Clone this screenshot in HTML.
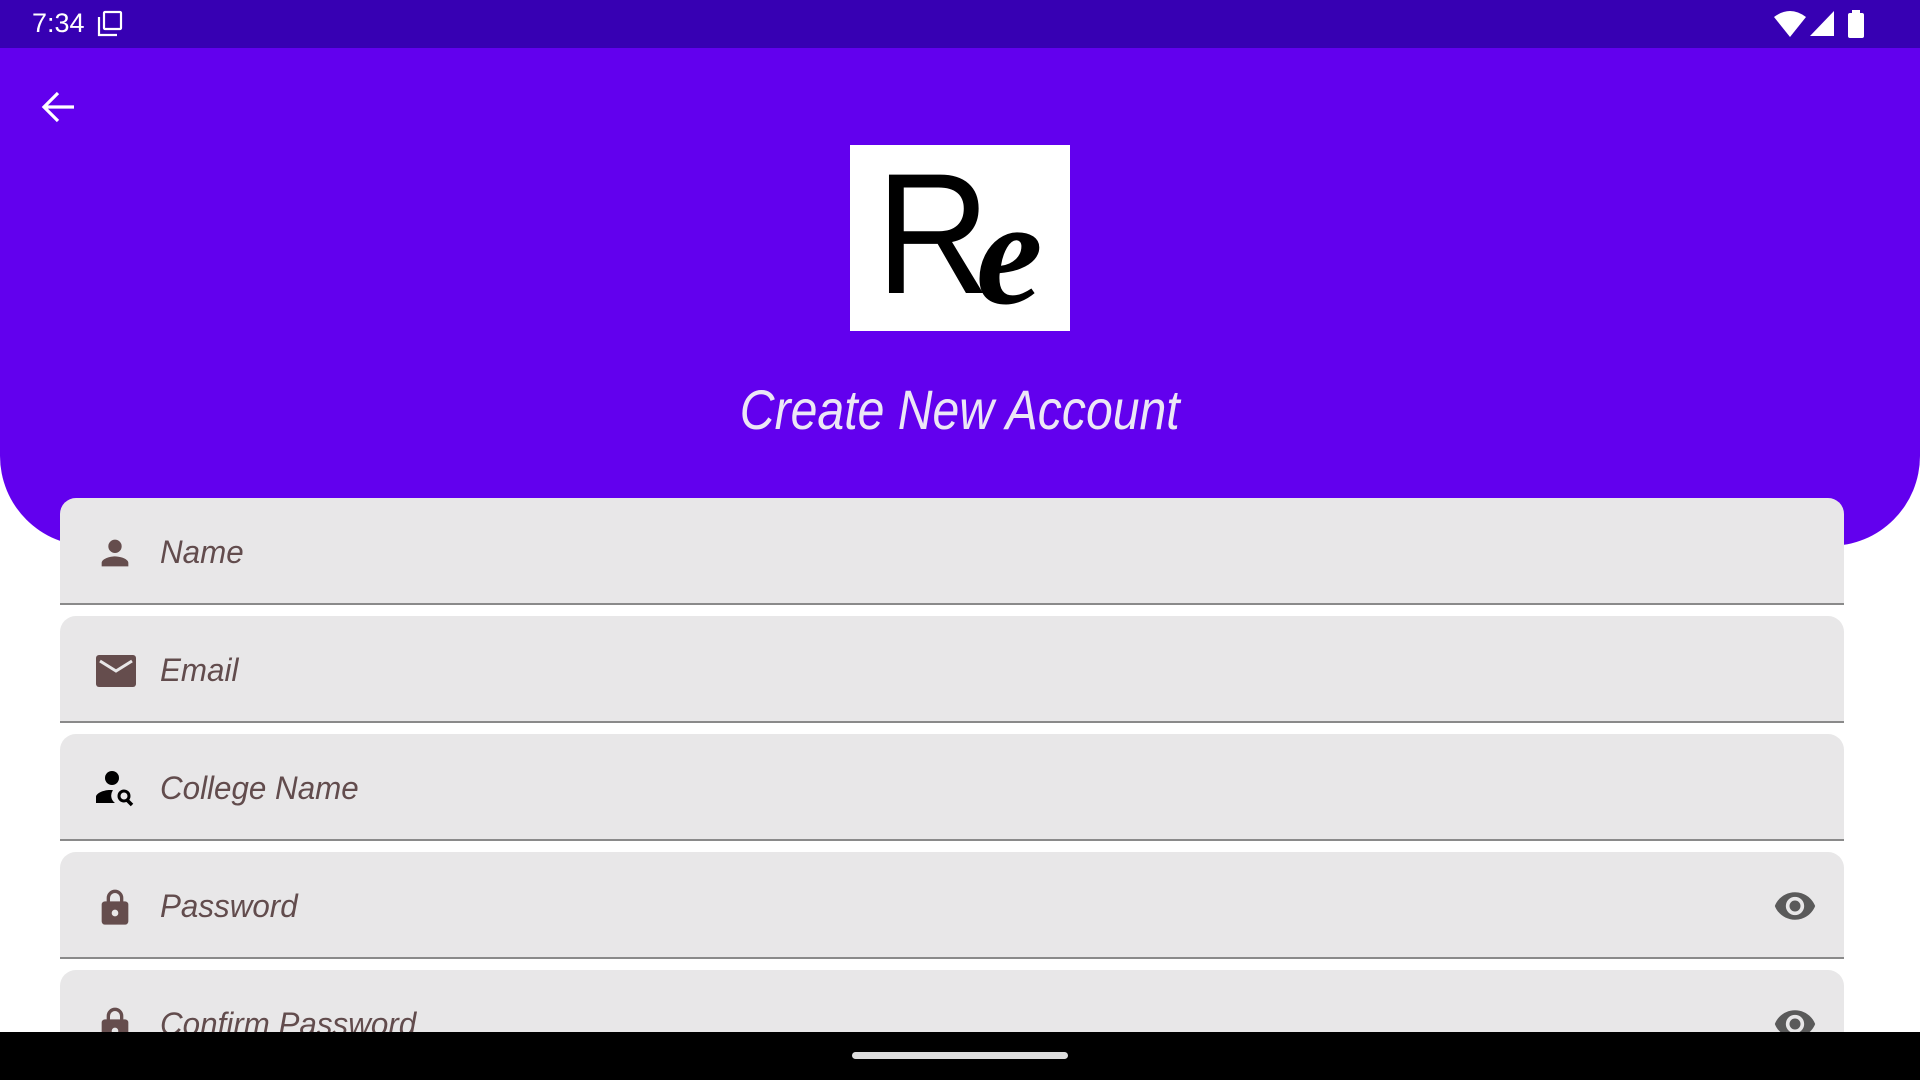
<!DOCTYPE html><html><head><style>
body{margin:0;width:1920px;height:1080px;overflow:hidden;background:#fff;font-family:"Liberation Sans",sans-serif;position:relative}
.sb{position:absolute;left:0;top:0;width:1920px;height:48px;background:#3700B3;color:#fff}
.hd{position:absolute;left:0;top:48px;width:1920px;height:498px;background:#6200EE;border-radius:0 0 90px 90px}
.logo{position:absolute;left:850px;top:145px;width:220px;height:186px;background:#fff;overflow:hidden}
.title{position:absolute;left:0;width:1920px;top:377px;text-align:center}
.title span{display:inline-block;color:#ece6f6;font-style:italic;font-size:56px;transform:scaleX(.86)}
.f{position:absolute;left:60px;width:1784px;height:105px;background:#e8e7e8;border-radius:16px 16px 0 0;border-bottom:2px solid #8a8a8a}
.f span{position:absolute;left:100px;top:36px;font-size:32px;font-style:italic;color:#624c4d;transform:scaleX(.98);transform-origin:left}
.f svg.ic{position:absolute;left:35px;top:35px}
.nav{position:absolute;left:0;top:1032px;width:1920px;height:48px;background:#000}
</style></head><body>
<div class="hd"></div>
<div class="sb"><span style="position:absolute;left:32px;top:8px;font-size:27px">7:34</span>
<svg style="position:absolute;left:96px;top:10px" width="28" height="28" viewBox="0 0 28 28" fill="none" stroke="#fff" stroke-width="2.2"><rect x="8" y="2" width="17" height="17" rx="1"/><path d="M3 7v18h18"/></svg>
<svg style="position:absolute;left:1774px;top:11px" width="32" height="26" viewBox="0 0 32 26"><path d="M0 6Q16-6 32 6L16 26Z" fill="#fff"/></svg>
<svg style="position:absolute;left:1810px;top:11px" width="24" height="25"><path d="M24 0V25H0Z" fill="#fff"/></svg>
<svg style="position:absolute;left:1848px;top:10px" width="16" height="28"><rect x="4" y="0" width="8" height="4" fill="#fff"/><rect x="0" y="3" width="16" height="25" rx="2" fill="#fff"/></svg>
</div>
<svg style="position:absolute;left:40px;top:90px" width="36" height="34" viewBox="0 0 36 34" fill="none" stroke="#fff" stroke-width="3.2"><path d="M34 17H4M18 3L4 17l14 14"/></svg>
<div class="logo"><span style="position:absolute;left:26px;top:-6px;font-size:172px;line-height:190px;color:#000;transform:scaleX(.92);transform-origin:left">R</span><span style="position:absolute;left:126px;top:38px;font-size:150px;line-height:140px;font-family:'Liberation Serif',serif;font-style:italic;font-weight:bold;color:#000">e</span></div>
<div class="title"><span>Create New Account</span></div>
<div class="f" style="top:498px"><svg class="ic" width="40" height="40" viewBox="0 0 24 24" fill="#654d4d"><path d="M12 12a4 4 0 1 0 0-8 4 4 0 0 0 0 8zm0 2c-2.7 0-8 1.3-8 4v2h16v-2c0-2.7-5.3-4-8-4z"/></svg><span>Name</span></div>
<div class="f" style="top:616px"><svg class="ic" width="42" height="40" viewBox="0 0 42 40"><rect x="1" y="4" width="40" height="32" rx="3" fill="#654d4d"/><path d="M5 10l16 10 16-10" stroke="#e8e7e8" stroke-width="3" fill="none"/></svg><span>Email</span></div>
<div class="f" style="top:734px"><svg class="ic" width="42" height="40" viewBox="0 0 42 40" fill="#000"><circle cx="17" cy="9" r="7"/><path d="M1 34v-6c0-4 8-7 14-7 1 0 2 0 3 .3A9 9 0 0 0 20 34z"/><circle cx="29" cy="27" r="5" fill="none" stroke="#000" stroke-width="3"/><path d="M32 31l5 5" stroke="#000" stroke-width="3.5"/></svg><span>College Name</span></div>
<div class="f" style="top:852px"><svg class="ic" width="40" height="42" viewBox="0 0 24 24" fill="#654d4d"><path d="M18 8h-1V6A5 5 0 0 0 7 6v2H6a2 2 0 0 0-2 2v10a2 2 0 0 0 2 2h12a2 2 0 0 0 2-2V10a2 2 0 0 0-2-2zM9 6a3 3 0 0 1 6 0v2H9zm3 11a2 2 0 1 1 0-4 2 2 0 0 1 0 4z"/></svg><span>Password</span>
<svg style="position:absolute;left:1713px;top:32px" width="44" height="44" viewBox="0 0 24 24" fill="#5a5a5a"><path d="M12 4.5C7 4.5 2.7 7.6 1 12c1.7 4.4 6 7.5 11 7.5s9.3-3.1 11-7.5c-1.7-4.4-6-7.5-11-7.5zM12 17a5 5 0 1 1 0-10 5 5 0 0 1 0 10zm0-8a3 3 0 1 0 0 6 3 3 0 0 0 0-6z"/></svg></div>
<div class="f" style="top:970px"><svg class="ic" width="40" height="42" viewBox="0 0 24 24" fill="#654d4d"><path d="M18 8h-1V6A5 5 0 0 0 7 6v2H6a2 2 0 0 0-2 2v10a2 2 0 0 0 2 2h12a2 2 0 0 0 2-2V10a2 2 0 0 0-2-2zM9 6a3 3 0 0 1 6 0v2H9zm3 11a2 2 0 1 1 0-4 2 2 0 0 1 0 4z"/></svg><span>Confirm Password</span>
<svg style="position:absolute;left:1713px;top:32px" width="44" height="44" viewBox="0 0 24 24" fill="#5a5a5a"><path d="M12 4.5C7 4.5 2.7 7.6 1 12c1.7 4.4 6 7.5 11 7.5s9.3-3.1 11-7.5c-1.7-4.4-6-7.5-11-7.5zM12 17a5 5 0 1 1 0-10 5 5 0 0 1 0 10zm0-8a3 3 0 1 0 0 6 3 3 0 0 0 0-6z"/></svg></div>
<div class="nav"><div style="position:absolute;left:852px;top:20px;width:216px;height:7px;border-radius:4px;background:#ddd"></div></div>
</body></html>
